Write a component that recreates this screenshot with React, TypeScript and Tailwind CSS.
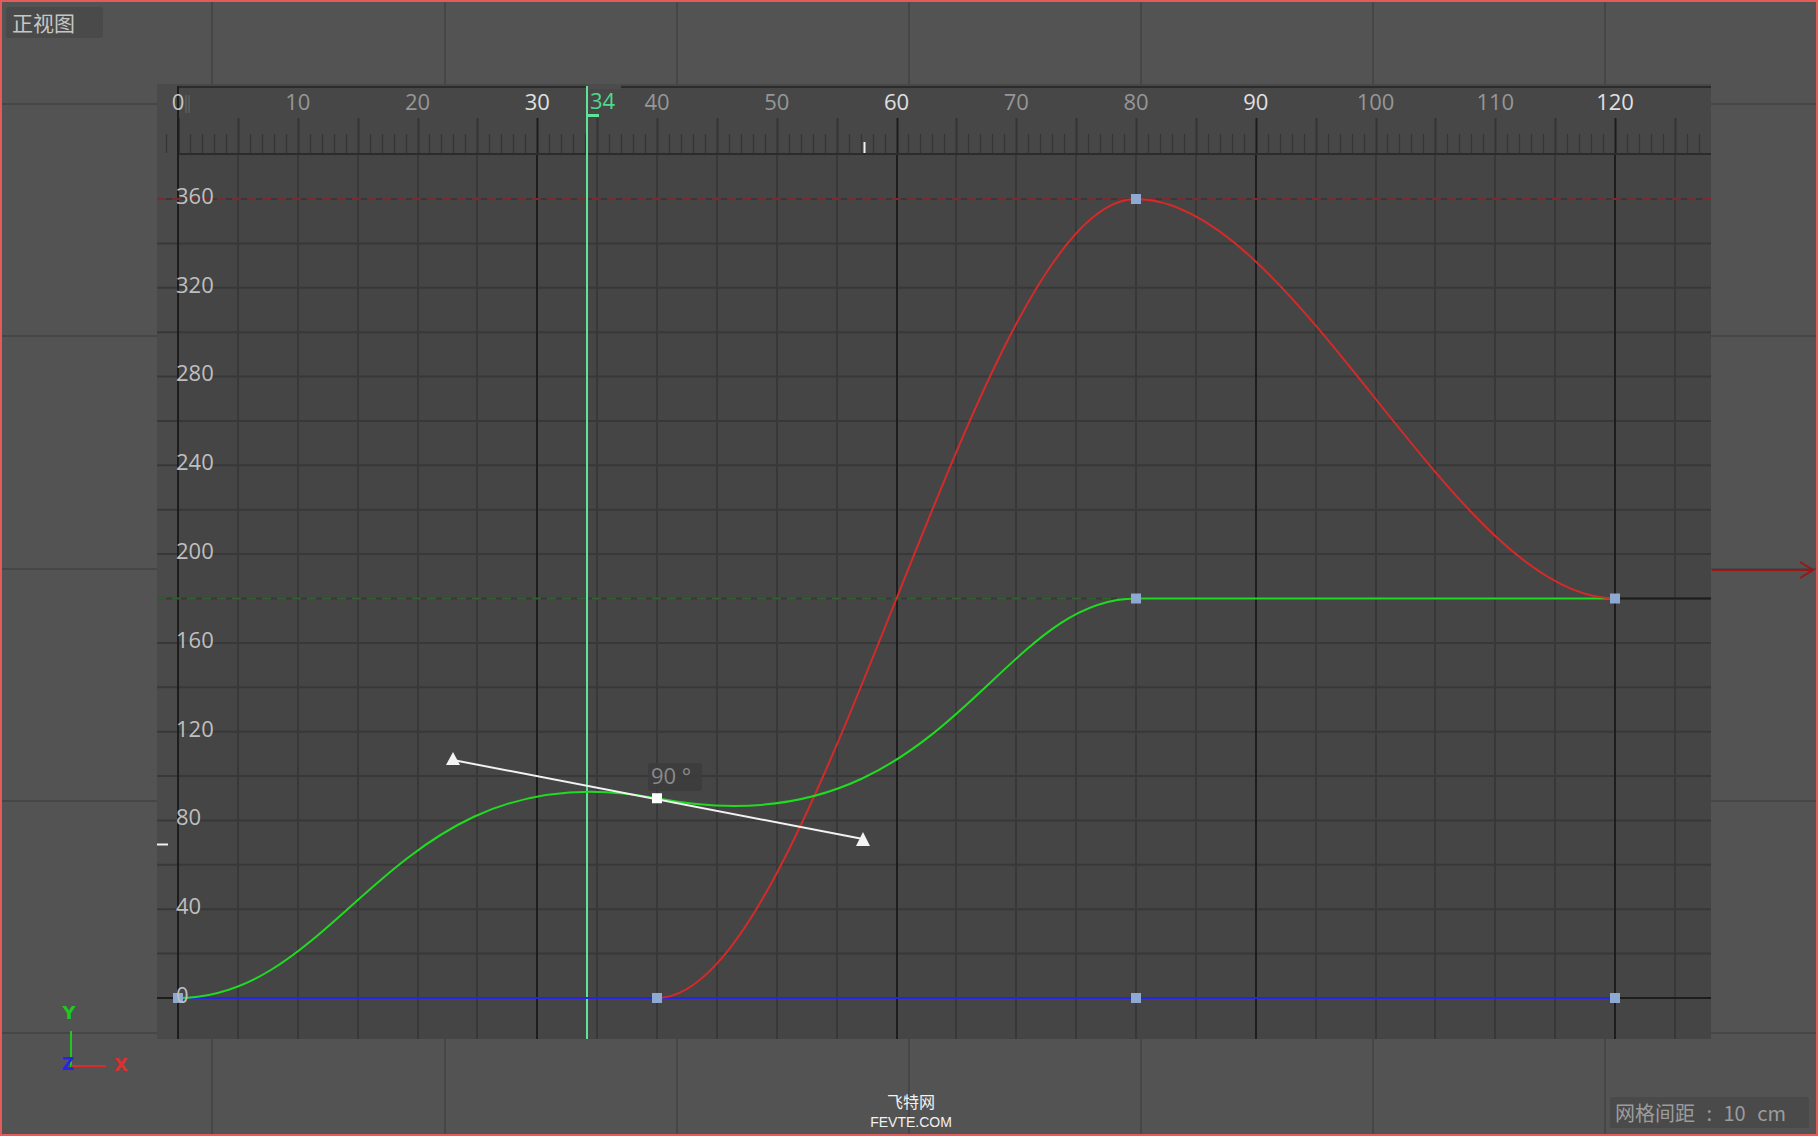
import React from "react";

// frame / value -> screen pixel
const FX = (f: number) => 178 + f * 11.975;
const VY = (v: number) => 998 - v * 2.2194;

const bgCols = [212, 445, 677, 909, 1141, 1373, 1605];
const bgRows = [104, 336, 569, 801, 1033];

type Pt = [number, number];

function bez(p0: Pt, p1: Pt, p2: Pt, p3: Pt) {
  const s = (p: Pt) => `${FX(p[0]).toFixed(1)} ${VY(p[1]).toFixed(1)}`;
  return `M ${s(p0)} C ${s(p1)}, ${s(p2)}, ${s(p3)}`;
}

const redPath =
  bez([40, 0], [53.33, 0], [66.67, 360], [80, 360]) +
  " " +
  bez([80, 360], [93.33, 360], [106.67, 180], [120, 180]).replace(/^M [^C]+/, "");

const greenPath =
  bez([0, 0], [14, 0], [18, 112.8], [40, 90]) +
  " " +
  bez([40, 90], [64, 65.1], [68, 180], [80, 180]).replace(/^M [^C]+/, "");

const keys: Pt[] = [
  [0, 0],
  [40, 0],
  [80, 0],
  [120, 0],
  [80, 360],
  [80, 180],
  [120, 180],
];

function GraphPanel() {
  const ticks: number[] = [];
  for (let f = -1; f <= 127; f++) ticks.push(f);
  const vLines: number[] = [];
  for (let f = 5; f <= 125; f += 5) vLines.push(f);
  const hLines: number[] = [];
  for (let v = 20; v <= 360; v += 20) hLines.push(v);
  const rulerLabels: number[] = [];
  for (let f = 0; f <= 120; f += 10) rulerLabels.push(f);
  const yLabels: number[] = [];
  for (let v = 0; v <= 360; v += 40) yLabels.push(v);

  return (
    <svg
      width={1554}
      height={955}
      viewBox="157 84 1554 955"
      className="block font-['Open_Sans','Noto_Sans',sans-serif]"
    >
      {/* panel backgrounds */}
      <rect x={157} y={84} width={21} height={955} fill="#4a4a4a" />
      <rect x={178} y={84} width={1533} height={71} fill="#474747" />
      <rect x={178} y={155} width={1533} height={884} fill="#454545" />

      {/* plot grid */}
      {hLines.map((v) => (
        <line key={`h${v}`} x1={157} x2={1711} y1={VY(v)} y2={VY(v)} stroke="#383838" strokeWidth={2} />
      ))}
      {vLines.map((f) => (
        <line
          key={`v${f}`}
          x1={Math.round(FX(f))}
          x2={Math.round(FX(f))}
          y1={155}
          y2={1039}
          stroke={f % 30 === 0 ? "#1d1d1d" : "#383838"}
          strokeWidth={2}
        />
      ))}
      <line x1={157} x2={1711} y1={998} y2={998} stroke="#1d1d1d" strokeWidth={2} />
      <line x1={1615} x2={1711} y1={VY(180)} y2={VY(180)} stroke="#1d1d1d" strokeWidth={2} />

      {/* ruler */}
      {ticks.map((f) => {
        const x = Math.round(FX(f)) + 0.5;
        const med = f % 5 === 0;
        return (
          <line
            key={`t${f}`}
            x1={x}
            x2={x}
            y1={med ? 118 : 134}
            y2={153}
            stroke={f % 30 === 0 ? "#1d1d1d" : "#353535"}
            strokeWidth={med ? 2 : 1.3}
          />
        );
      })}
      <line x1={178} x2={1711} y1={87} y2={87} stroke="#2c2c2c" strokeWidth={2} />
      <line x1={178} x2={1711} y1={154} y2={154} stroke="#2c2c2c" strokeWidth={2} />
      <line x1={178} x2={178} y1={86} y2={1039} stroke="#1d1d1d" strokeWidth={2} />
      <line x1={186} x2={186} y1={95} y2={113} stroke="#6a6a6a" strokeWidth={1} />
      <line x1={189} x2={189} y1={95} y2={113} stroke="#6a6a6a" strokeWidth={1} />
      <line x1={864.5} x2={864.5} y1={142} y2={153} stroke="#f0f0f0" strokeWidth={2} />
      <line x1={157} x2={168} y1={844.5} y2={844.5} stroke="#f0f0f0" strokeWidth={2} />

      {rulerLabels.map((f) => (
        <text
          key={`rl${f}`}
          x={FX(f)}
          y={104}
          textAnchor="middle"
          dominantBaseline="middle"
          fontSize={22}
          fill={f === 0 ? "#c4c4c4" : f % 30 === 0 ? "#e0e0e0" : "#969696"}
        >
          {f}
        </text>
      ))}

      {/* limit lines */}
      <line x1={157} x2={1711} y1={VY(360)} y2={VY(360)} stroke="#7e2a2a" strokeWidth={2} strokeDasharray="9 6" />
      <line x1={157} x2={1136} y1={VY(180)} y2={VY(180)} stroke="#2e632e" strokeWidth={2} strokeDasharray="9 6" />

      {/* current frame */}
      <rect x={587} y={84} width={34} height={5} fill="#4c4c4c" />
      <line x1={587} x2={587} y1={86} y2={1039} stroke="#5fe397" strokeWidth={2} />
      <rect x={587} y={114} width={12} height={3} fill="#5fe397" />
      <text x={590} y={103} dominantBaseline="middle" fontSize={22} fill="#4ed98b">
        34
      </text>

      {/* curves */}
      <line x1={178} x2={1615} y1={998} y2={998} stroke="#2525e2" strokeWidth={2} />
      <line x1={FX(80)} x2={1615} y1={VY(180)} y2={VY(180)} stroke="#20dc20" strokeWidth={2} />
      <path d={redPath} fill="none" stroke="#d42a2a" strokeWidth={2} />
      <path d={greenPath} fill="none" stroke="#20dc20" strokeWidth={2} />

      {/* tangent of selected key */}
      <line x1={453} y1={760} x2={863} y2={839} stroke="#f2f2f2" strokeWidth={2} />
      <polygon points="453,752 446,765 460,765" fill="#f4f4f4" />
      <polygon points="863,832 856,846 870,846" fill="#f4f4f4" />

      {keys.map(([f, v]) => (
        <rect
          key={`k${f}-${v}`}
          x={FX(f) - 5}
          y={VY(v) - 5}
          width={10}
          height={10}
          fill="#8eaad2"
        />
      ))}
      <rect x={FX(40) - 5} y={VY(90) - 5} width={10} height={10} fill="#ffffff" />

      {yLabels.map((v) => (
        <text
          key={`yl${v}`}
          x={176}
          y={VY(v) - 1}
          dominantBaseline="middle"
          fontSize={22}
          fill="#bfbfbf"
        >
          {v}
        </text>
      ))}

      {/* value readout */}
      <rect x={648} y={763} width={54} height={28} rx={3} fill="#3c3c3c" opacity={0.9} />
      <text x={651} y={778} dominantBaseline="middle" fontSize={22} fill="#8a8a8a">
        90 °
      </text>
    </svg>
  );
}

export default function App() {
  return (
    <div className="relative w-[1818px] h-[1136px] overflow-hidden bg-[#535353] font-['Open_Sans','Noto_Sans_CJK_SC',sans-serif]">
      {/* viewport grid, axis arrow, gizmo */}
      <svg className="absolute inset-0" width={1818} height={1136}>
        {bgCols.map((x) => (
          <line key={`c${x}`} x1={x} x2={x} y1={0} y2={1136} stroke="#464646" strokeWidth={2} />
        ))}
        {bgRows.map((y) => (
          <line key={`r${y}`} x1={0} x2={1818} y1={y} y2={y} stroke="#464646" strokeWidth={2} />
        ))}
        <line x1={1712} x2={1812} y1={570} y2={570} stroke="#9b1616" strokeWidth={2} />
        <polyline points="1800,562 1813,570 1800,578" fill="none" stroke="#9b1616" strokeWidth={2} />

        <line x1={71} x2={71} y1={1031} y2={1067} stroke="#1fc81f" strokeWidth={2} />
        <line x1={71} x2={106} y1={1066} y2={1066} stroke="#e02a2a" strokeWidth={2} />
        <text x={69} y={1014} textAnchor="middle" dominantBaseline="middle" fontSize={18} fontWeight={700} fill="#1fc81f" className="font-['DejaVu_Sans',sans-serif]">
          Y
        </text>
        <text x={68} y={1065} textAnchor="middle" dominantBaseline="middle" fontSize={17} fontWeight={700} fill="#2626e0" className="font-['DejaVu_Sans',sans-serif]">
          Z
        </text>
        <text x={121} y={1066} textAnchor="middle" dominantBaseline="middle" fontSize={18} fontWeight={700} fill="#dd3030" className="font-['DejaVu_Sans',sans-serif]">
          X
        </text>
      </svg>

      <div className="relative pl-[157px] pt-[84px]">
        <GraphPanel />
      </div>

      <div className="absolute left-[6px] top-[7px] w-[97px] h-[31px] rounded-[3px] bg-[#4a4a4a] pl-[6px] text-[21px] leading-[31px] text-[#c6c6c6] font-['Noto_Sans_CJK_SC',sans-serif]">
        正视图
      </div>

      <div className="absolute right-[9px] bottom-[8px] w-[199px] h-[31px] rounded-[2px] bg-[#4a4a4a] pl-[5px] text-[20px] leading-[31px] text-[#9c9c9c] font-['Noto_Sans_CJK_SC',sans-serif] whitespace-pre [word-spacing:7px]">
        网格间距 : 10 cm
      </div>

      <div className="absolute left-[866px] top-[1091px] w-[90px] flex flex-col items-center text-[#f2f2f2] leading-[21px]">
        <span className="text-[16px] font-['Noto_Sans_CJK_SC',sans-serif]">飞特网</span>
        <span className="text-[14px] font-['Liberation_Sans',sans-serif]">FEVTE.COM</span>
      </div>

      {/* red viewport frame */}
      <div className="absolute inset-0 border-2 border-[#e35b5b] pointer-events-none" />
    </div>
  );
}
